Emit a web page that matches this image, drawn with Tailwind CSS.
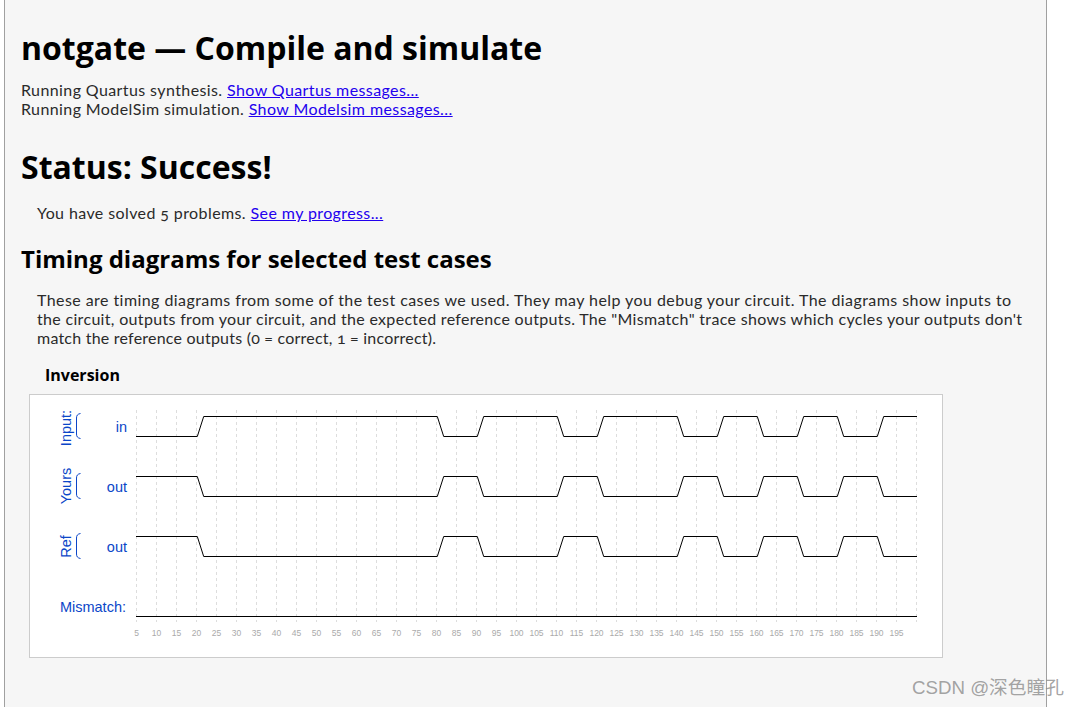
<!DOCTYPE html>
<html lang="en">
<head>
  <meta charset="UTF-8" />
  <title>notgate — Compile and simulate</title>
  <script src="https://cdn.jsdelivr.net/npm/@tailwindcss/browser@4"></script>
</head>
<body class="bg-white h-[707px] overflow-hidden relative font-['Lato',sans-serif] tracking-[0.4px] oldstyle-nums text-[16px] leading-[19px] text-[#2a2a2a]">

  <!-- Page -->
  <div class="ml-[4px] w-[1043px] h-[707px] bg-[#f6f6f6] border-x border-[#a0a0a0] pl-[16px] pr-[16px] pt-[29px]">
    <h1 class="font-['Open_Sans',sans-serif] font-bold tracking-normal text-[32px] leading-[38px] text-black">notgate — Compile and simulate</h1>
    <p class="mt-[13px]">
      Running Quartus synthesis. <a href="#" class="text-[#2200ee] underline">Show Quartus messages...</a><br>
      Running ModelSim simulation. <a href="#" class="text-[#2200ee] underline">Show Modelsim messages...</a>
    </p>

    <h2 class="mt-[30px] font-['Open_Sans',sans-serif] font-bold tracking-normal text-[32px] leading-[38px] text-black">Status: Success!</h2>
    <p class="mt-[17px] ml-[16px]">You have solved 5 problems. <a href="#" class="text-[#2200ee] underline">See my progress...</a></p>

    <h3 class="mt-[22px] font-['Open_Sans',sans-serif] font-bold tracking-normal text-[24px] leading-[29px] text-black">Timing diagrams for selected test cases</h3>
    <p class="mt-[17px] ml-[16px] w-[1000px] whitespace-nowrap">
      <span class="tracking-[0.43px]">These are timing diagrams from some of the test cases we used. They may help you debug your circuit. The diagrams show inputs to</span><br>
      <span class="tracking-[0.32px]">the circuit, outputs from your circuit, and the expected reference outputs. The "Mismatch" trace shows which cycles your outputs don't</span><br>
      <span class="tracking-[0.22px]">match the reference outputs (0 = correct, 1 = incorrect).</span>
    </p>

    <h4 class="mt-[19px] ml-[24px] font-['Open_Sans',sans-serif] font-bold tracking-normal text-[16px] leading-[19px] text-black">Inversion</h4>

    <!-- Timing diagram, svg coordinates are offset by the box position (29,394) -->
    <div class="mt-[9px] ml-[8px] w-[914px] h-[264px] bg-white border border-[#cccccc]">
      <svg id="wave" width="912" height="262" viewBox="30 395 912 262" class="block font-['Liberation_Sans',sans-serif] font-normal tracking-normal">
        <g id="grid"></g>
        <g fill="none" stroke="#0b46c8" stroke-width="1">
          <path d="M80.5 413.5 C77.5 414 76.5 415.5 76.5 418 V434 C76.5 436.500 77.500 438 80.500 438.500" />
          <path d="M80.5 473.5 C77.5 474 76.5 475.500 76.5 478 V494 C76.5 496.500 77.500 498 80.500 498.500" />
          <path d="M80.5 533.500 C77.5 534 76.5 535.500 76.5 538 V554 C76.5 556.500 77.500 558 80.500 558.500" />
        </g>
        <g fill="#0b46c8" font-size="14.500">
          <text transform="translate(70.500 428) rotate(-90)" text-anchor="middle">Input:</text>
          <text transform="translate(70.500 486) rotate(-90)" text-anchor="middle">Yours</text>
          <text transform="translate(70.500 546.500) rotate(-90)" text-anchor="middle">Ref</text>
          <text x="127" y="432" text-anchor="end">in</text>
          <text x="127" y="492" text-anchor="end">out</text>
          <text x="127" y="552" text-anchor="end">out</text>
          <text x="126" y="612" text-anchor="end">Mismatch:</text>
        </g>
        <g fill="none" stroke="#000" stroke-width="1">
          <path id="w-in" />
          <path id="w-out" />
          <path id="w-ref" />
          <path d="M136 616.500 H917" />
        </g>
        <g id="ticks" fill="#aaaaaa" font-size="8.500" text-anchor="middle"></g>
      </svg>
    </div>
  </div>

  <!-- Watermark -->
  <div class="absolute left-[912px] top-[677px] text-[18.7px] leading-[22px] font-normal tracking-normal text-[#8c8c8c]/80 font-['Liberation_Sans','Noto_Sans_CJK_SC',sans-serif] whitespace-nowrap">CSDN @深色瞳孔</div>

<script>
  const NS = "http://www.w3.org/2000/svg";
  const edges = [197, 437, 477, 557, 597, 677, 717, 757, 797, 837, 877];

  // first edge of "in" rises, "out" and "ref" are the inverse
  function wave(high, low, startHigh) {
    let level = startHigh;
    let d = `M136 ${level ? high : low}`;
    edges.forEach(x => {
      d += ` L${x + 0.3} ${level ? high : low}`;
      level = !level;
      d += ` L${x + 6.7} ${level ? high : low}`;
    });
    return d + ` L917 ${level ? high : low}`;
  }
  document.getElementById("w-in").setAttribute("d", wave(416.5, 436.5, false));
  document.getElementById("w-out").setAttribute("d", wave(476.5, 496.5, true));
  document.getElementById("w-ref").setAttribute("d", wave(536.5, 556.5, true));

  const grid = document.getElementById("grid");
  const ticks = document.getElementById("ticks");
  for (let t = 5; t <= 200; t += 5) {
    const x = 136.5 + (t - 5) * 4;
    const line = document.createElementNS(NS, "line");
    line.setAttribute("x1", x);
    line.setAttribute("x2", x);
    line.setAttribute("y1", 410);
    line.setAttribute("y2", 622);
    line.setAttribute("stroke", "#dddddd");
    line.setAttribute("stroke-dasharray", "3 3");
    grid.appendChild(line);
    if (t < 200) {
      const label = document.createElementNS(NS, "text");
      label.setAttribute("x", x);
      label.setAttribute("y", 636);
      label.textContent = t;
      ticks.appendChild(label);
    }
  }
</script>
</body>
</html>
